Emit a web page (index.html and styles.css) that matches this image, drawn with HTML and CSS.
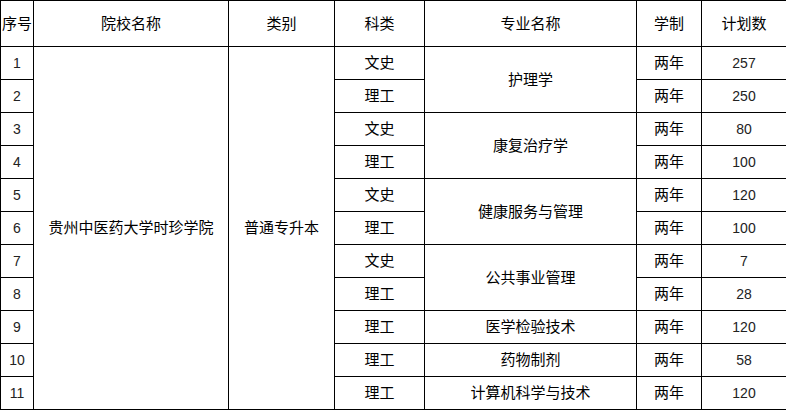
FILE: index.html
```html
<!DOCTYPE html>
<html lang="zh">
<head>
<meta charset="utf-8">
<link rel="stylesheet" href="styles.css">
</head>
<body>
<table class="plan">
  <colgroup>
    <col class="c1"><col class="c2"><col class="c3"><col class="c4"><col class="c5"><col class="c6"><col class="c7">
  </colgroup>
  <thead>
    <tr class="head">
      <th>序号</th><th>院校名称</th><th>类别</th><th>科类</th><th>专业名称</th><th>学制</th><th>计划数</th>
    </tr>
  </thead>
  <tbody>
    <tr><td class="num">1</td><td rowspan="11">贵州中医药大学时珍学院</td><td rowspan="11">普通专升本</td><td>文史</td><td rowspan="2">护理学</td><td>两年</td><td class="num">257</td></tr>
    <tr><td class="num">2</td><td>理工</td><td>两年</td><td class="num">250</td></tr>
    <tr><td class="num">3</td><td>文史</td><td rowspan="2">康复治疗学</td><td>两年</td><td class="num">80</td></tr>
    <tr><td class="num">4</td><td>理工</td><td>两年</td><td class="num">100</td></tr>
    <tr><td class="num">5</td><td>文史</td><td rowspan="2">健康服务与管理</td><td>两年</td><td class="num">120</td></tr>
    <tr><td class="num">6</td><td>理工</td><td>两年</td><td class="num">100</td></tr>
    <tr><td class="num">7</td><td>文史</td><td rowspan="2">公共事业管理</td><td>两年</td><td class="num">7</td></tr>
    <tr><td class="num">8</td><td>理工</td><td>两年</td><td class="num">28</td></tr>
    <tr><td class="num">9</td><td>理工</td><td>医学检验技术</td><td>两年</td><td class="num">120</td></tr>
    <tr><td class="num">10</td><td>理工</td><td>药物制剂</td><td>两年</td><td class="num">58</td></tr>
    <tr><td class="num">11</td><td>理工</td><td>计算机科学与技术</td><td>两年</td><td class="num">120</td></tr>
  </tbody>
</table>
</body>
</html>
```
FILE: styles.css
```css
html, body {
  margin: 0;
  padding: 0;
  background: #fff;
}
.plan {
  border-collapse: collapse;
  table-layout: fixed;
  width: 786px;
  font-family: "Liberation Sans", "Noto Sans CJK SC", sans-serif;
  font-size: 15px;
  color: #000;
}
.c1 { width: 33px; }
.c2 { width: 195px; }
.c3 { width: 106px; }
.c4 { width: 90px; }
.c5 { width: 212px; }
.c6 { width: 65px; }
.c7 { width: 85px; }
.plan th, .plan td {
  border: 1px solid #000;
  padding: 0;
  text-align: center;
  vertical-align: middle;
  font-weight: normal;
  white-space: nowrap;
  line-height: 16px;
}
.plan td.num {
  font-size: 14px;
  color: #222;
}
.plan .head { height: 46px; }
.plan tbody tr { height: 33px; }
```
